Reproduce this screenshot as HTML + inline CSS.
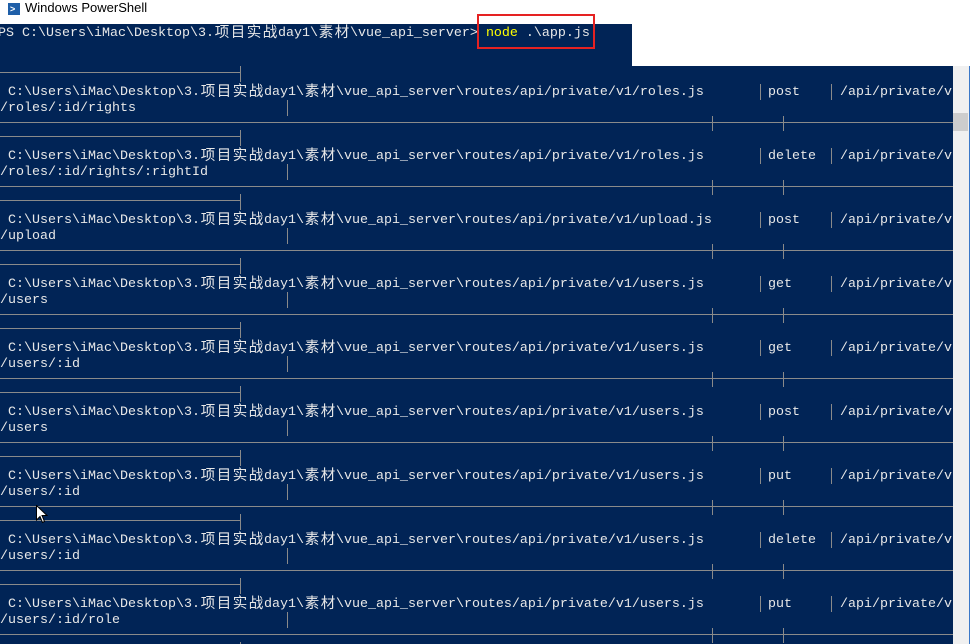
<!DOCTYPE html>
<html><head><meta charset="utf-8">
<style>
*{margin:0;padding:0}
body{width:978px;height:644px;overflow:hidden;background:#fff;position:relative;font-family:"Liberation Mono","Noto Sans CJK SC",monospace}
.t{position:absolute;font-size:13.33px;line-height:16px;height:16px;color:#e8e8e8;white-space:pre}
.t .c{font-family:"Noto Sans CJK SC",sans-serif;font-size:14.5px;line-height:16px;height:16px;display:inline-block;width:16px;text-align:center;vertical-align:top;position:relative;top:-2px}
.h{position:absolute;height:1px;background:#8a8a8a}
.v{position:absolute;width:1px;background:#8a8a8a}
</style></head><body>
<div style="position:absolute;left:8px;top:3px;width:12px;height:12px;background:#1f5fa8"></div>
<div style="position:absolute;left:10px;top:4px;color:#fff;font:bold 9px 'Liberation Sans'">&gt;</div>
<div style="position:absolute;left:25px;top:0px;font:13px 'Liberation Sans',sans-serif;color:#000">Windows PowerShell</div>
<div style="position:absolute;left:0;top:24px;width:632px;height:42px;background:#012456"></div>
<div style="position:absolute;left:0;top:66px;width:953px;height:578px;background:#012456"></div>
<div style="position:absolute;left:953px;top:66px;width:17px;height:578px;background:#f0f0f0"></div>
<div style="position:absolute;left:953px;top:113px;width:15px;height:18px;background:#cdcdcd"></div>
<div style="position:absolute;left:969px;top:66px;width:1px;height:578px;background:#3b78c8"></div>
<div class="t" style="left:-2px;top:26px">PS C:\Users\iMac\Desktop\3.<span class="c">项</span><span class="c">目</span><span class="c">实</span><span class="c">战</span>day1\<span class="c">素</span><span class="c">材</span>\vue_api_server&gt; <span style="color:#ffff00">node</span> .\app.js</div>
<div style="position:absolute;left:477px;top:14px;width:114px;height:31px;border:2px solid #e52222"></div>
<div id="rows"></div>
<svg style="position:absolute;left:36px;top:505px" width="12" height="19" viewBox="0 0 12 19"><path d="M0.5 0.5 L0.5 15 L4 11.5 L6.5 17.5 L8.5 16.5 L6 10.5 L11 10.5 Z" fill="#fff" stroke="#000" stroke-width="1"/></svg>
<script>
var d=[["roles.js","post","/roles/:id/rights"],["roles.js","delete","/roles/:id/rights/:rightId"],["upload.js","post","/upload"],["users.js","get","/users"],["users.js","get","/users/:id"],["users.js","post","/users"],["users.js","put","/users/:id"],["users.js","delete","/users/:id"],["users.js","put","/users/:id/role"]];
var h="",c=function(s){return '<span class="c">'+s+'</span>'};
var p=' C:\\Users\\iMac\\Desktop\\3.'+c('项')+c('目')+c('实')+c('战')+'day1\\'+c('素')+c('材')+'\\vue_api_server\\routes/api/private/v1/';
d.forEach(function(r,k){var y=64*k;
h+='<div class="h" style="left:0;top:'+(72+y)+'px;width:240px"></div><div class="v" style="left:240px;top:'+(66+y)+'px;height:16px"></div>';
h+='<div class="t" style="left:0;top:'+(85+y)+'px">'+p+r[0]+'</div>';
h+='<div class="v" style="left:760px;top:'+(84+y)+'px;height:16px"></div><div class="t" style="left:768px;top:'+(85+y)+'px">'+r[1]+'</div>';
h+='<div class="v" style="left:831px;top:'+(84+y)+'px;height:16px"></div><div class="t" style="left:840px;top:'+(85+y)+'px">/api/private/v</div>';
h+='<div class="t" style="left:0;top:'+(101+y)+'px">'+r[2]+'</div><div class="v" style="left:287px;top:'+(100+y)+'px;height:16px"></div>';
h+='<div class="h" style="left:0;top:'+(122+y)+'px;width:953px"></div><div class="v" style="left:712px;top:'+(116+y)+'px;height:15px"></div><div class="v" style="left:783px;top:'+(116+y)+'px;height:15px"></div>';
});
h+='<div class="v" style="left:240px;top:642px;height:2px"></div>';
document.getElementById('rows').outerHTML=h;
</script>
</body></html>
